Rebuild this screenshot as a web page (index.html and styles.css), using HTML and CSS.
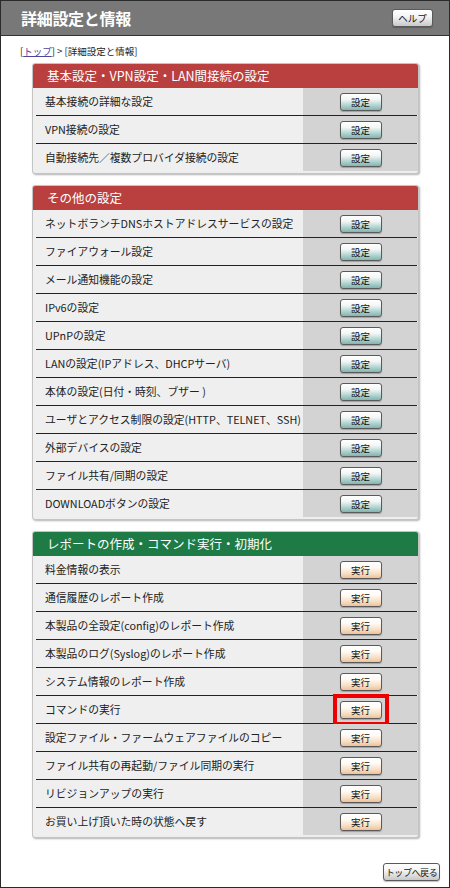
FILE: index.html
```html
<!DOCTYPE html>
<html lang="ja">
<head>
<meta charset="utf-8">
<title>詳細設定と情報</title>
<link rel="stylesheet" href="styles.css">
</head>
<body>
<div class="page">
  <div class="header">
    <h1 class="title">詳細設定と情報</h1>
    <span class="btn btn-gray btn-help">ヘルプ</span>
  </div>
  <div class="breadcrumb">[<a class="crumb-link" href="#">トップ</a>] &gt; [詳細設定と情報]</div>

  <div class="section">
    <div class="sec-head red">基本設定・VPN設定・LAN間接続の設定</div>
    <div class="row"><div class="label">基本接続の詳細な設定</div><div class="action"><span class="btn btn-set">設定</span></div></div>
    <div class="row"><div class="label">VPN接続の設定</div><div class="action"><span class="btn btn-set">設定</span></div></div>
    <div class="row"><div class="label">自動接続先／複数プロバイダ接続の設定</div><div class="action"><span class="btn btn-set">設定</span></div></div>
  </div>

  <div class="section">
    <div class="sec-head red">その他の設定</div>
    <div class="row"><div class="label">ネットボランチDNSホストアドレスサービスの設定</div><div class="action"><span class="btn btn-set">設定</span></div></div>
    <div class="row"><div class="label">ファイアウォール設定</div><div class="action"><span class="btn btn-set">設定</span></div></div>
    <div class="row"><div class="label">メール通知機能の設定</div><div class="action"><span class="btn btn-set">設定</span></div></div>
    <div class="row"><div class="label">IPv6の設定</div><div class="action"><span class="btn btn-set">設定</span></div></div>
    <div class="row"><div class="label">UPnPの設定</div><div class="action"><span class="btn btn-set">設定</span></div></div>
    <div class="row"><div class="label">LANの設定(IPアドレス、DHCPサーバ)</div><div class="action"><span class="btn btn-set">設定</span></div></div>
    <div class="row"><div class="label">本体の設定(日付・時刻、ブザー )</div><div class="action"><span class="btn btn-set">設定</span></div></div>
    <div class="row"><div class="label">ユーザとアクセス制限の設定(HTTP、TELNET、SSH)</div><div class="action"><span class="btn btn-set">設定</span></div></div>
    <div class="row"><div class="label">外部デバイスの設定</div><div class="action"><span class="btn btn-set">設定</span></div></div>
    <div class="row"><div class="label">ファイル共有/同期の設定</div><div class="action"><span class="btn btn-set">設定</span></div></div>
    <div class="row"><div class="label">DOWNLOADボタンの設定</div><div class="action"><span class="btn btn-set">設定</span></div></div>
  </div>

  <div class="section">
    <div class="sec-head green">レポートの作成・コマンド実行・初期化</div>
    <div class="row"><div class="label">料金情報の表示</div><div class="action"><span class="btn btn-run">実行</span></div></div>
    <div class="row"><div class="label">通信履歴のレポート作成</div><div class="action"><span class="btn btn-run">実行</span></div></div>
    <div class="row"><div class="label">本製品の全設定(config)のレポート作成</div><div class="action"><span class="btn btn-run">実行</span></div></div>
    <div class="row"><div class="label">本製品のログ(Syslog)のレポート作成</div><div class="action"><span class="btn btn-run">実行</span></div></div>
    <div class="row"><div class="label">システム情報のレポート作成</div><div class="action"><span class="btn btn-run">実行</span></div></div>
    <div class="row"><div class="label">コマンドの実行</div><div class="action"><span class="mark"><span class="btn btn-run">実行</span></span></div></div>
    <div class="row"><div class="label">設定ファイル・ファームウェアファイルのコピー</div><div class="action"><span class="btn btn-run">実行</span></div></div>
    <div class="row"><div class="label">ファイル共有の再起動/ファイル同期の実行</div><div class="action"><span class="btn btn-run">実行</span></div></div>
    <div class="row"><div class="label">リビジョンアップの実行</div><div class="action"><span class="btn btn-run">実行</span></div></div>
    <div class="row"><div class="label">お買い上げ頂いた時の状態へ戻す</div><div class="action"><span class="btn btn-run">実行</span></div></div>
  </div>

  <div class="footer">
    <span class="btn btn-gray btn-top">トップへ戻る</span>
  </div>
</div>
</body>
</html>
```
FILE: styles.css
```css
* { box-sizing: border-box; }
html, body { margin: 0; padding: 0; background: #fff; }
body {
  font-family: "Noto Sans CJK JP", "Noto Sans", sans-serif;
  color: #222;
}
.page {
  width: 450px;
  height: 888px;
  border: 1px solid #2a2a2a;
  display: flex;
  flex-direction: column;
  overflow: hidden;
}
.header {
  height: 35px;
  flex: none;
  background: #787878;
  border-bottom: 1px solid #333;
  display: flex;
  align-items: center;
  justify-content: space-between;
  padding: 0 16px 0 20px;
}
.title {
  margin: 0;
  font-size: 16px;
  font-weight: bold;
  color: #fff;
  line-height: 20px;
  letter-spacing: -0.3px;
}
.breadcrumb {
  margin: 8px 0 0 19px;
  height: 19px;
  font-size: 9.5px;
  line-height: 14px;
  color: #222;
}
.crumb-link { color: #4b46a0; text-decoration: underline; }

.section {
  margin: 0 0 11px 31px;
  width: 387px;
  border: 1px solid #c4c4c4;
  border-radius: 3px;
  background: #eeeeee;
  padding-bottom: 2px;
  box-shadow: 1px 1px 2px rgba(0,0,0,0.3);
  overflow: hidden;
}
.sec-head {
  height: 24px;
  line-height: 24px;
  padding-left: 14px;
  color: #fff;
  font-size: 12.5px;
}
.sec-head.red { background: #b9403f; }
.sec-head.green { background: #1e7b45; }

.row {
  display: flex;
  height: 28px;
  padding-top: 1px;
  background: linear-gradient(#222, #222) 3px 0 / calc(100% - 4px) 1px no-repeat, #efefef;
}
.sec-head + .row {
  height: 27px;
  padding-top: 0;
  background: #efefef;
}
.label {
  flex: 1;
  padding-left: 12px;
  font-size: 10.8px;
  line-height: 27px;
  white-space: nowrap;
  background: #efefef;
}
.action {
  width: 115px;
  flex: none;
  background: #d3d3d3;
  display: flex;
  align-items: center;
  justify-content: center;
}
.btn {
  display: inline-flex;
  align-items: center;
  justify-content: center;
  height: 18px;
  border: 1px solid #5a5a5a;
  border-radius: 3px;
  font-size: 9.5px;
  color: #111;
  white-space: nowrap;
  box-shadow: 0 1px 1px rgba(0,0,0,0.25);
}
.btn-set {
  width: 42px;
  background: linear-gradient(#ffffff 0%, #f2f6f6 35%, #a9cfcb 75%, #84b5b0 100%);
}
.btn-run {
  width: 42px;
  background: linear-gradient(#ffffff 0%, #fffaf4 35%, #f7dcc0 75%, #eec09a 100%);
}
.btn-gray {
  background: linear-gradient(#ffffff 0%, #f4f4f4 40%, #c8c8c8 100%);
}
.btn-help { width: 41px; }
.mark {
  display: inline-flex;
  border: 4px solid #ee0000;
  padding: 3px;
  margin: -7px 0;
}
.footer {
  margin-top: auto;
  padding: 0 9px 6px 0;
  display: flex;
  justify-content: flex-end;
}
.btn-top {
  width: 57px;
  height: 18px;
  font-size: 9px;
  letter-spacing: -0.4px;
}
```
